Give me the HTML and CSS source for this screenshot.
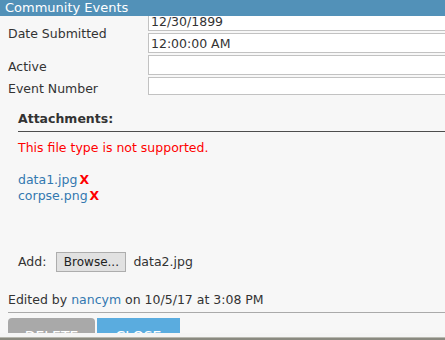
FILE: index.html
```html
<!DOCTYPE html>
<html lang="en">
<head>
    <meta charset="UTF-8">
    <meta name="viewport" content="width=device-width, initial-scale=1.0">
    <title>Community Events</title>
    <link rel="stylesheet" href="styles.css">
</head>
<body>
    <div class="dialog">
        <div class="titlebar">Community Events</div>

        <div class="content">
            <div class="form-grid">
                <div class="label label-tall">Date Submitted</div>
                <div class="field"><input type="text" value="12/30/1899"></div>
                <div class="field"><input type="text" value="12:00:00 AM"></div>
                <div class="label">Active</div>
                <div class="field"><input type="text" value=""></div>
                <div class="label">Event Number</div>
                <div class="field"><input type="text" class="short" value=""></div>
            </div>

            <div class="attachments">
                <h3>Attachments:</h3>
                <p class="error">This file type is not supported.</p>
                <ul class="files">
                    <li><a href="#">data1.jpg</a><span class="remove">X</span></li>
                    <li><a href="#">corpse.png</a><span class="remove">X</span></li>
                </ul>
                <div class="add-row">
                    <span>Add:</span>
                    <button class="browse">Browse...</button>
                    <span class="filename">data2.jpg</span>
                </div>
            </div>

            <p class="edited">Edited by <a href="#">nancym</a> on 10/5/17 at 3:08 PM</p>

            <div class="actions">
                <button class="btn btn-delete">DELETE</button>
                <button class="btn btn-close">CLOSE</button>
            </div>
        </div>
    </div>
    <div class="backdrop"></div>
</body>
</html>
```

FILE: styles.css
```css
* {
    margin: 0;
    padding: 0;
    box-sizing: border-box;
}

body {
    font-family: "DejaVu Sans", Verdana, sans-serif;
    font-size: 12.5px;
    line-height: 16px;
    color: #333;
    background-color: #f7f7f7;
    width: 445px;
    height: 340px;
    overflow: hidden;
}

.dialog {
    height: 333px;
    overflow: hidden;
    background-color: #f7f7f7;
}

.titlebar {
    position: relative;
    z-index: 1;
    height: 16px;
    padding-left: 5px;
    background-color: #5291b8;
    color: #fff;
    font-size: 13px;
    line-height: 15px;
}

.content {
    margin-top: -5px;
}

.form-grid {
    display: grid;
    grid-template-columns: 148px 1fr;
    row-gap: 2px;
}

.label {
    padding: 4px 0 0 8px;
    display: flex;
    align-items: center;
}

.label-tall {
    grid-row: span 2;
}

.field input {
    display: block;
    width: 320px;
    height: 20px;
    border: 1px solid #c2c2c2;
    background-color: #fff;
    padding: 1px 2px 0;
    font-family: inherit;
    font-size: 12.5px;
    color: #333;
}

.field input.short {
    height: 18px;
}

.attachments {
    padding: 14px 0 0 18px;
}

.attachments h3 {
    font-size: 12.5px;
    font-weight: bold;
    padding-bottom: 4px;
    border-bottom: 1px solid #4d4d4d;
}

.error {
    color: #f00;
    margin-top: 8px;
}

.files {
    list-style: none;
    margin-top: 16px;
}

a {
    color: #3378b0;
    text-decoration: none;
}

.remove {
    color: #f00;
    font-weight: bold;
    margin-left: 2px;
}

.add-row {
    display: flex;
    align-items: center;
    gap: 10px;
    margin-top: 48px;
}

.browse {
    height: 20px;
    width: 70px;
    border: 1px solid #adadad;
    background-color: #e1e1e1;
    font-family: inherit;
    font-size: 12px;
    color: #222;
}

.filename {
    margin-left: -3px;
}

.edited {
    margin: 20px 0 0 8px;
    padding-bottom: 4px;
    border-bottom: 1px solid #aaa;
}

.actions {
    display: flex;
    gap: 2px;
    margin: 5px 0 0 8px;
}

.btn {
    height: 30px;
    padding-top: 6px;
    border: none;
    border-radius: 4px 4px 0 0;
    font-family: inherit;
    font-size: 14px;
    color: #fff;
    text-align: center;
}

.btn-delete {
    width: 87px;
    background-color: #a9a9a9;
}

.btn-close {
    width: 83px;
    background-color: #5aacdf;
    border-radius: 0;
}

.backdrop {
    height: 7px;
    background: linear-gradient(#f5f5f5 0 4px, #b8b8b0 4px 5px, #8a8a80 5px);
}
```
